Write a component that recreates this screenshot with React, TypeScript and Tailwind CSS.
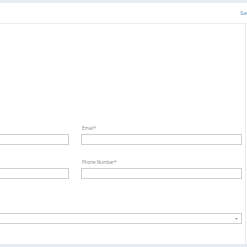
import React from "react";

export default function App() {
  return (
    <div
      className="w-[247px] h-[247px] overflow-hidden bg-white flex flex-col"
      style={{ fontFamily: '"Open Sans", "Liberation Sans", sans-serif' }}
    >
      <div className="h-[3px] bg-[#e6ecf3] shrink-0" />
      <div className="h-[21px] shrink-0 flex items-center border-b border-[#ececec] w-[262px]">
        <div className="flex-1" />
        <span className="text-[6px] leading-none text-[#4f97cc] w-[22px]">Save</span>
      </div>
      <div className="flex-1 border-r border-[#ececec] w-[246px] overflow-hidden">
        <div className="-ml-[92px] pt-[102px] w-[334px]">
          <div className="grid grid-cols-[161px_161px] gap-x-[12px] gap-y-[15px]">
            <div className="flex flex-col">
              <span className="text-[4.5px] leading-[5px] text-[#8a8a8a] pl-[1px] mb-[3px]">First Name*</span>
              <div className="h-[11px] border border-[#cfcfcf] bg-white" />
            </div>
            <div className="flex flex-col">
              <span className="text-[4.5px] leading-[5px] text-[#8a8a8a] pl-[1px] mb-[3px]">Email*</span>
              <div className="h-[11px] border border-[#cfcfcf] bg-white" />
            </div>
            <div className="flex flex-col">
              <span className="text-[4.5px] leading-[5px] text-[#8a8a8a] pl-[1px] mb-[3px]">Last Name*</span>
              <div className="h-[11px] border border-[#cfcfcf] bg-white" />
            </div>
            <div className="flex flex-col">
              <span className="text-[4.5px] leading-[5px] text-[#8a8a8a] pl-[1px] mb-[3px]">Phone Number*</span>
              <div className="h-[11px] border border-[#cfcfcf] bg-white" />
            </div>
          </div>
          <div className="mt-[34px] w-[334px] h-[11px] border border-[#cfcfcf] bg-white flex items-center justify-end pr-[3px]">
            <svg width="3" height="2" viewBox="0 0 3 2">
              <path d="M0 0 L3 0 L1.5 2 Z" fill="#a5a5a5" />
            </svg>
          </div>
        </div>
      </div>
      <div className="h-[3px] bg-[#e6ecf3] shrink-0" />
    </div>
  );
}
